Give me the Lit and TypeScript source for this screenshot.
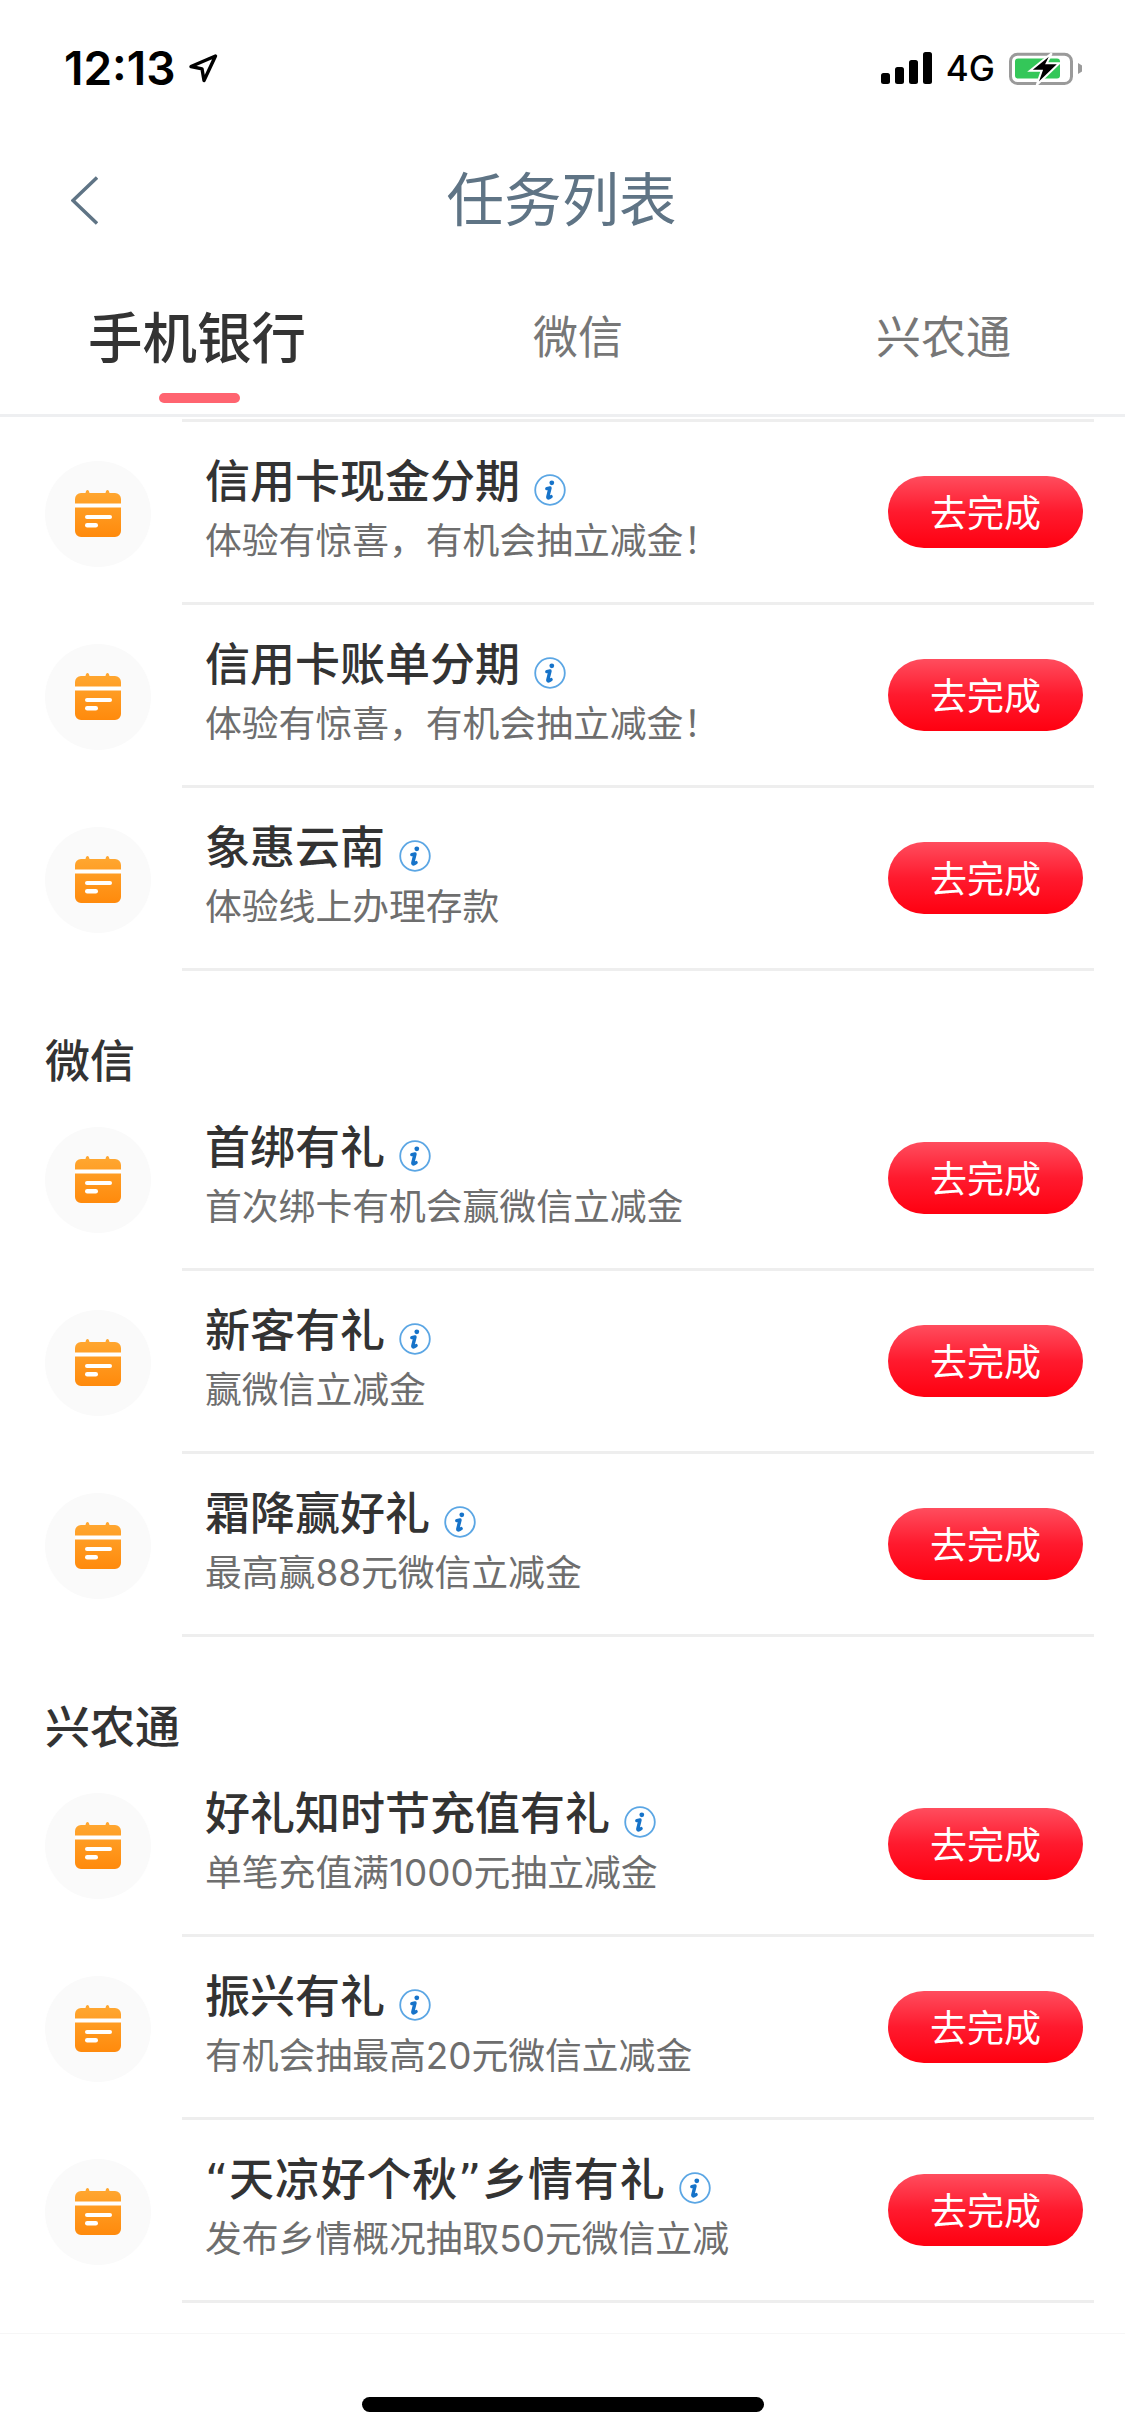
import { LitElement, css, html, svg } from 'lit';
import { customElement } from 'lit/decorators.js';

type Task = { title: string; sub: string; wide?: boolean };
type Section = { name?: string; tasks: Task[] };

const SECTIONS: Section[] = [
	{
		tasks: [
			{ title: '信用卡现金分期', sub: '体验有惊喜，有机会抽立减金！' },
			{ title: '信用卡账单分期', sub: '体验有惊喜，有机会抽立减金！' },
			{ title: '象惠云南', sub: '体验线上办理存款' },
		],
	},
	{
		name: '微信',
		tasks: [
			{ title: '首绑有礼', sub: '首次绑卡有机会赢微信立减金' },
			{ title: '新客有礼', sub: '赢微信立减金' },
			{ title: '霜降赢好礼', sub: '最高赢88元微信立减金' },
		],
	},
	{
		name: '兴农通',
		tasks: [
			{ title: '好礼知时节充值有礼', sub: '单笔充值满1000元抽立减金' },
			{ title: '振兴有礼', sub: '有机会抽最高20元微信立减金' },
			{ title: '“天凉好个秋”乡情有礼', sub: '发布乡情概况抽取50元微信立减', wide: true },
		],
	},
];

const TABS = ['手机银行', '微信', '兴农通'];

const calendarIcon = svg`
	<svg class="cal" viewBox="0 0 46 47" width="46" height="47">
		<defs>
			<linearGradient id="calFill" x1="0" y1="0" x2="0" y2="1">
				<stop offset="0" stop-color="#ffa832"></stop>
				<stop offset="1" stop-color="#ff8a0c"></stop>
			</linearGradient>
		</defs>
		<path fill="url(#calFill)" d="M6 3h4.500c.4-1.800 1-3 2-3s1.600 1.200 2 3h16c.4-1.800 1-3 2-3s1.600 1.200 2 3H40a6 6 0 0 1 6 6v32a6 6 0 0 1-6 6H6a6 6 0 0 1-6-6V9a6 6 0 0 1 6-6z"></path>
		<rect x="0" y="13.500" width="46" height="4" fill="#fff"></rect>
		<rect x="10" y="25" width="27" height="4" rx="2" fill="#fff"></rect>
		<rect x="10" y="33" width="13" height="4.500" rx="2.200" fill="#fff"></rect>
	</svg>`;

const infoIcon = svg`
	<svg class="info" viewBox="0 0 32 32" width="32" height="32">
		<circle cx="16" cy="16" r="14.800" fill="none" stroke="#5ba6e4" stroke-width="1.800"></circle>
		<circle cx="17.800" cy="8.800" r="2.400" fill="#1673c9"></circle>
		<path fill="none" stroke="#1673c9" stroke-width="3.400" stroke-linecap="round" stroke-linejoin="round" d="M12.800 14.600l3.200-.6-2.200 8.800c-.2 1 .5 1.400 1.300 1l2-1.200"></path>
	</svg>`;

@customElement('app-root')
export class AppRoot extends LitElement {
	static styles = css`
		:host {
			display: block;
			width: 1125px;
			height: 2436px;
			background: #fff;
			position: relative;
			overflow: hidden;
			font-family: 'Noto Sans CJK SC', 'Noto Sans', sans-serif;
			color: #333;
		}

		.status {
			height: 112px;
			box-sizing: border-box;
			padding: 46px 43px 0 64px;
			display: flex;
			justify-content: space-between;
			align-items: flex-start;
		}

		.status-left, .status-right {
			display: flex;
			align-items: center;
			height: 44px;
		}

		.time {
			font: 600 46px/44px Inter, sans-serif;
			color: #000;
		}

		.arrow {
			margin-left: 12px;
		}

		.net {
			font: 500 35px/44px Inter, sans-serif;
			color: #000;
			margin: 0 14px 0 14px;
		}

		.nav {
			height: 150px;
			box-sizing: border-box;
			padding: 18px 2px 0 0;
			position: relative;
			display: flex;
			align-items: center;
			justify-content: center;
			font-size: 57.500px;
			color: #5f7485;
			line-height: 76px;
		}

		.back {
			position: absolute;
			left: 71px;
			top: 64px;
		}

		.tabs {
			display: grid;
			grid-template-columns: 394px 368px 363px;
			height: 155px;
			box-sizing: border-box;
			border-bottom: 3px solid #eeeff1;
		}

		.tab {
			display: flex;
			flex-direction: column;
			align-items: center;
			font-size: 45px;
			line-height: 64px;
			color: #777;
			padding-top: 41px;
		}

		.tab.active {
			font-size: 54.500px;
			font-weight: 500;
			color: #333;
		}

		.tab .bar {
			width: 81px;
			height: 10px;
			border-radius: 5px;
			background: #ff6470;
			margin: 26px 0 0 5px;
		}

		.list {
			margin: 2px 31px 0 182px;
			height: 3px;
			background: #eee;
		}

		.section-name {
			height: 117px;
			box-sizing: border-box;
			padding: 62px 0 0 45px;
			font-size: 45px;
			font-weight: 500;
			line-height: 52px;
			color: #333;
		}

		.row {
			display: flex;
			padding-left: 45px;
			height: 183px;
		}

		.badge {
			width: 106px;
			height: 106px;
			border-radius: 50%;
			background: #fafafa;
			align-self: center;
			margin-right: 31px;
			display: flex;
			align-items: center;
			justify-content: center;
			flex: none;
		}

		.body {
			flex: 1;
			margin-right: 31px;
			padding: 0 11px 0 23px;
			border-bottom: 3px solid #eee;
			display: flex;
			align-items: center;
			justify-content: space-between;
		}

		.title {
			display: flex;
			align-items: center;
			font-family: 'DejaVu Sans', 'Noto Sans CJK SC', sans-serif;
			font-size: 45px;
			font-weight: 500;
			line-height: 58px;
			color: #333;
		}

		.title.wide {
			letter-spacing: 0.8px;
		}

		.title svg {
			margin-left: 14px;
			margin-top: 13px;
		}

		.sub {
			font-family: Inter, 'Noto Sans CJK SC', sans-serif;
			font-size: 36.800px;
			line-height: 58px;
			color: #6e6e6e;
		}

		.go {
			width: 195px;
			height: 72px;
			border-radius: 36px;
			background: linear-gradient(180deg, #ff4d5e 0%, #ff1a2e 50%, #ff0010 100%);
			color: #fff;
			font-size: 37px;
			line-height: 70px;
			text-align: center;
			flex: none;
		}

		.home {
			position: absolute;
			left: 362px;
			top: 2397px;
			width: 402px;
			height: 15px;
			border-radius: 8px;
			background: #000;
		}

		.fade {
			position: absolute;
			left: 0;
			right: 0;
			top: 2333px;
			height: 1px;
			background: #f6f6f6;
		}
	`;

	private renderRow(task: Task) {
		return html`
			<div class="row">
				<div class="badge">${calendarIcon}</div>
				<div class="body">
					<div>
						<div class="title ${task.wide ? 'wide' : ''}">${task.title}${infoIcon}</div>
						<div class="sub">${task.sub}</div>
					</div>
					<div class="go">去完成</div>
				</div>
			</div>
		`;
	}

	render() {
		return html`
			<div class="status">
				<div class="status-left">
					<span class="time">12:13</span>
					<svg class="arrow" viewBox="0 0 30 30" width="30" height="30">
						<path fill="none" stroke="#000" stroke-width="3.400" stroke-linejoin="round" d="M27.500 3L3 13.500l11 2.300 2 11.700z"></path>
					</svg>
				</div>
				<div class="status-right">
					<svg viewBox="0 0 51 32" width="51" height="32">
						<rect x="0" y="21" width="9" height="11" rx="2.500"></rect>
						<rect x="14" y="15" width="9" height="17" rx="2.500"></rect>
						<rect x="28" y="8" width="9" height="24" rx="2.500"></rect>
						<rect x="42" y="0" width="9" height="32" rx="2.500"></rect>
					</svg>
					<span class="net">4G</span>
					<svg viewBox="0 0 73 36" width="73" height="36">
						<rect x="1.500" y="4.200" width="61" height="29.300" rx="7" fill="none" stroke="#9a9a9a" stroke-width="3"></rect>
						<rect x="6" y="8.500" width="45" height="20" rx="3" fill="#34c759"></rect>
						<path fill="#9a9a9a" d="M69 13l4 2.500v6l-4 2.500z"></path>
						<path fill="#000" stroke="#fff" stroke-width="2" d="M42.700 3.300L21 20.700h11.700L27.700 35l22.600-21.700H37.700z"></path>
					</svg>
				</div>
			</div>

			<div class="nav">
				<svg class="back" viewBox="0 0 27 49" width="27" height="49">
					<path fill="none" stroke="#5f7485" stroke-width="3.400" d="M26 1.500L2 24.500l24 23"></path>
				</svg>
				任务列表
			</div>

			<div class="tabs">
				${TABS.map((t, i) => html`
					<div class="tab ${i === 0 ? 'active' : ''}">
						${t}
						${i === 0 ? html`<div class="bar"></div>` : ''}
					</div>
				`)}
			</div>

			<div class="list"></div>
			${SECTIONS.map((s) => html`
				${s.name ? html`<div class="section-name">${s.name}</div>` : ''}
				${s.tasks.map((t) => this.renderRow(t))}
			`)}

			<div class="fade"></div>
			<div class="home"></div>
		`;
	}
}
